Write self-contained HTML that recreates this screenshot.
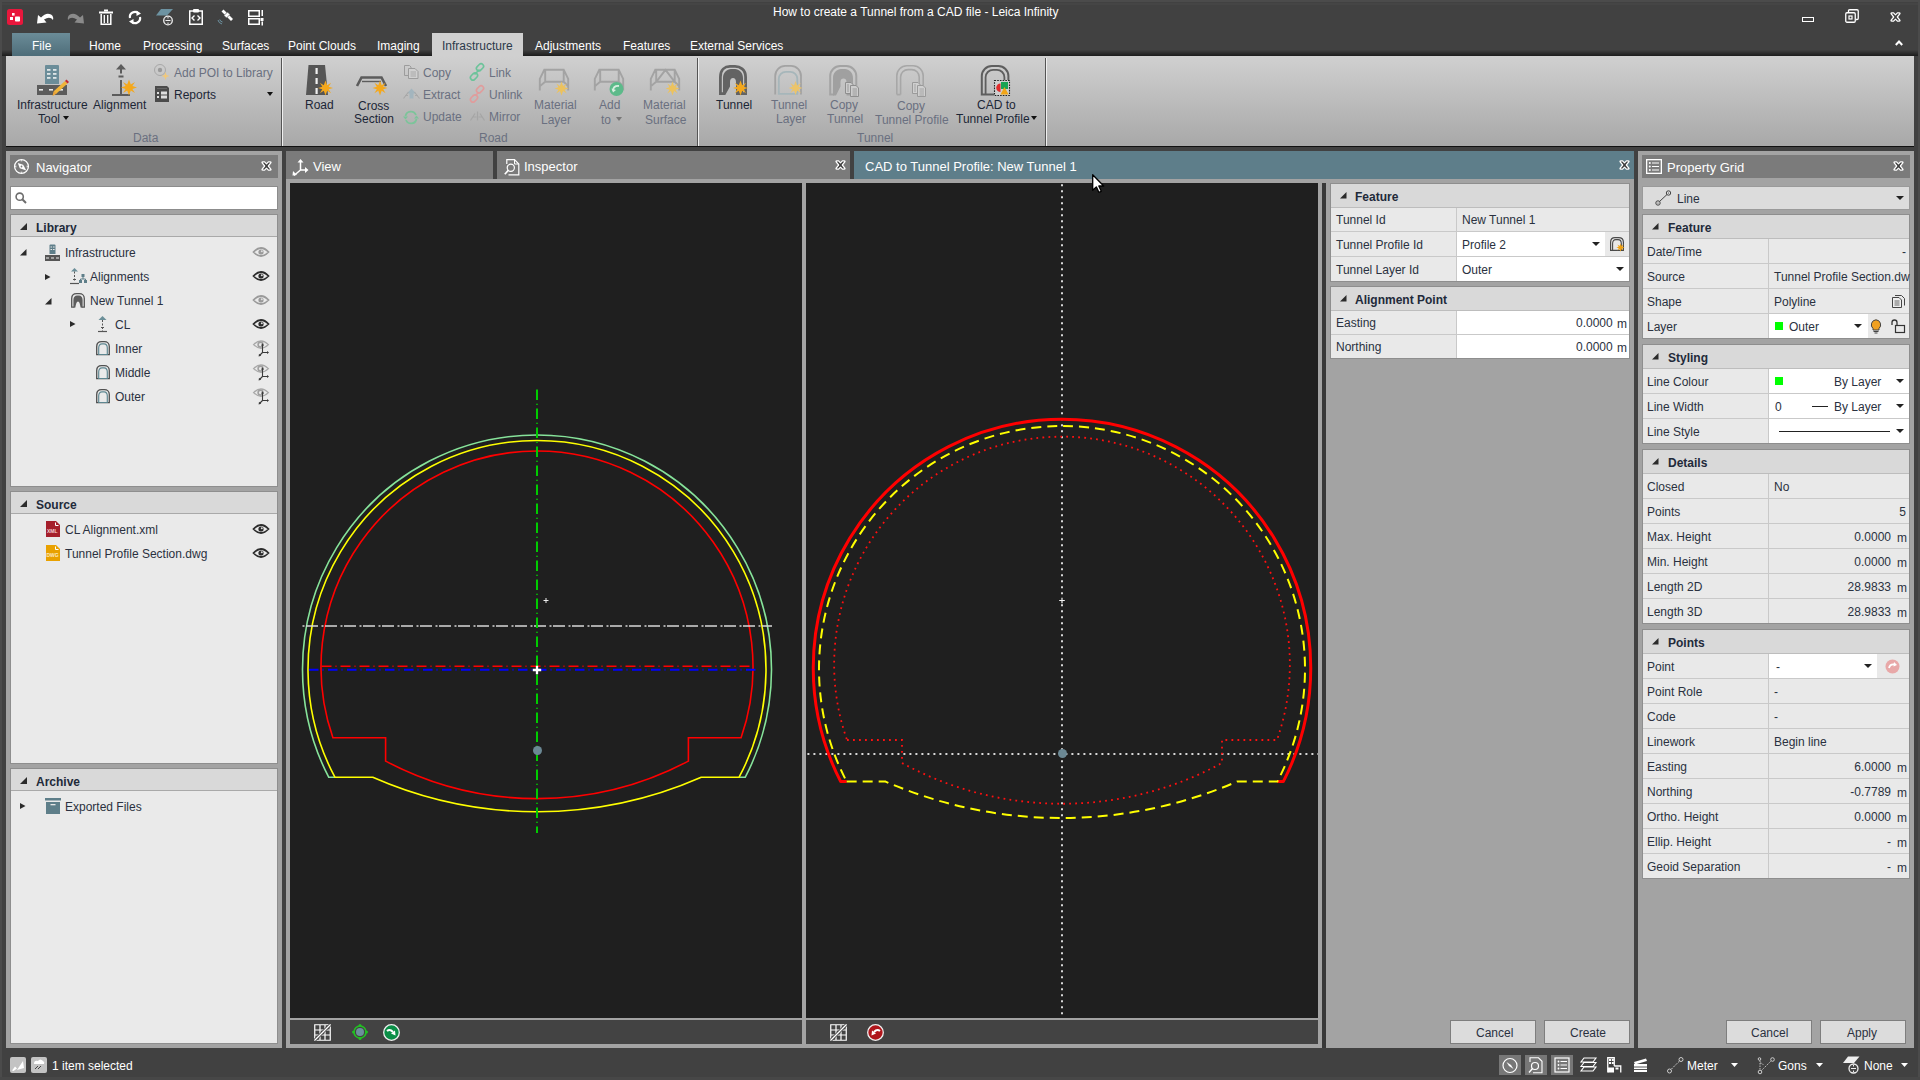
<!DOCTYPE html>
<html><head><meta charset="utf-8">
<style>
*{margin:0;padding:0;box-sizing:border-box}
html,body{width:1920px;height:1080px;overflow:hidden;background:#414141;font-family:"Liberation Sans",sans-serif;font-size:12px;color:#222}
.a{position:absolute}
.t{position:absolute;white-space:nowrap;line-height:1}
.w{color:#fff}
svg{position:absolute;overflow:visible}
.nb{font-weight:bold;font-size:12px;color:#222a3a}
.tr{font-size:12px;color:#2a3140}
.rb{font-size:12px;color:#1c2636}
.rd{font-size:12px;color:#6a7080}
.btn{background:#dcdcdc;border:1px solid #7e7e7e}
</style></head><body>
<!-- window borders -->
<div class="a" style="left:0;top:0;width:1920px;height:2px;background:#4b4b4b"></div>
<div class="a" style="left:0;top:0;width:2px;height:1080px;background:#4b4b4b"></div>
<div class="a" style="left:1918px;top:0;width:2px;height:1080px;background:#4b4b4b"></div>

<div class="a" style="left:2px;top:50px;width:1916px;height:6px;background:linear-gradient(#404040,#1c1c1c)"></div>
<div class="a" style="left:2px;top:3px;width:1916px;height:2px;background:#454545"></div>
<!-- TITLE -->
<div class="t w" style="left:773px;top:6px;font-size:12px">How to create a Tunnel from a CAD file - Leica Infinity</div>

<!-- TABS -->
<div class="a" style="left:12px;top:33px;width:58px;height:23px;background:linear-gradient(#6b8c98,#4e6d79)"></div>
<div class="t w" style="left:32px;top:40px;font-size:12px">File</div>
<div class="t w" style="left:89px;top:40px;font-size:12px">Home</div>
<div class="t w" style="left:143px;top:40px;font-size:12px">Processing</div>
<div class="t w" style="left:222px;top:40px;font-size:12px">Surfaces</div>
<div class="t w" style="left:288px;top:40px;font-size:12px">Point Clouds</div>
<div class="t w" style="left:377px;top:40px;font-size:12px">Imaging</div>
<div class="a" style="left:432px;top:33px;width:91px;height:24px;background:#d0d0d0"></div>
<div class="t" style="left:442px;top:40px;font-size:12px;color:#2c3a4a">Infrastructure</div>
<div class="t w" style="left:535px;top:40px;font-size:12px">Adjustments</div>
<div class="t w" style="left:623px;top:40px;font-size:12px">Features</div>
<div class="t w" style="left:690px;top:40px;font-size:12px">External Services</div>

<!-- RIBBON -->
<div class="a" style="left:6px;top:56px;width:1908px;height:90px;background:linear-gradient(#d0d0d0,#a8a8a8)"></div>
<div class="a" style="left:6px;top:146px;width:1908px;height:1px;background:#111"></div>
<div class="a" style="left:281px;top:58px;width:1px;height:88px;background:#555"></div>
<div class="a" style="left:282px;top:58px;width:1px;height:88px;background:#f0f0f0"></div>
<div class="a" style="left:697px;top:58px;width:1px;height:88px;background:#555"></div>
<div class="a" style="left:698px;top:58px;width:1px;height:88px;background:#f0f0f0"></div>
<div class="a" style="left:1045px;top:58px;width:1px;height:88px;background:#555"></div>
<div class="a" style="left:1046px;top:58px;width:1px;height:88px;background:#f0f0f0"></div>

<!-- NAVIGATOR PANEL -->
<div class="a" style="left:6px;top:151px;width:276px;height:897px;background:#a3a3a3"></div>
<div class="a" style="left:10px;top:155px;width:268px;height:23px;background:#7b7b7b"></div>
<div class="t w" style="left:36px;top:161px;font-size:13px">Navigator</div>


<!-- NAV CONTENT -->
<svg style="left:14px;top:159px" width="16" height="16" viewBox="0 0 16 16"><circle cx="7.5" cy="7.5" r="6.9" fill="none" stroke="#fff" stroke-width="1.3"/><path d="M7.5 1 L6.6 2.3 H8.4Z M7.5 14 L6.6 12.7 H8.4Z M1 7.5 L2.3 6.6 V8.4Z M14 7.5 L12.7 6.6 V8.4Z" fill="#fff"/><path d="M3.8 4 L9.2 5.8 L12.3 11.5 L5.8 9.2Z" fill="#fff"/><circle cx="7.5" cy="7.5" r="0.9" fill="#7b7b7b"/></svg>
<svg style="left:261px;top:161px" width="12" height="11" viewBox="0 0 12 11"><path d="M1 1.6 Q1 0.8 1.9 0.8 H3.6 L5.5 2.9 L7.4 0.8 H9.1 Q10 0.8 10 1.6 L7.3 5 L10 8.4 Q10 9.2 9.1 9.2 H7.4 L5.5 7.1 L3.6 9.2 H1.9 Q1 9.2 1 8.4 L3.7 5Z" fill="#3c3c3c" stroke="#fff" stroke-width="1.25" stroke-linejoin="round"/></svg>
<div class="a" style="left:10px;top:186px;width:268px;height:24px;background:#fff;border:1px solid #8c8c8c"></div>
<svg style="left:15px;top:192px" width="12" height="12" viewBox="0 0 12 12"><circle cx="4.7" cy="4.7" r="3.6" fill="none" stroke="#6d6d6d" stroke-width="1.6"/><path d="M7.3 7.3 L11 11" stroke="#6d6d6d" stroke-width="2"/></svg>

<!-- Library section -->
<div class="a" style="left:10px;top:214px;width:268px;height:273px;background:#eaeaea;border:1px solid #8e8e8e"></div>
<div class="a" style="left:11px;top:215px;width:266px;height:22px;background:#d9d9d9;border-bottom:1px solid #a9a9a9"></div>
<svg style="left:20px;top:223px" width="7" height="7"><path d="M7 0 L7 7 L0 7Z" fill="#2b2b2b"/></svg>
<div class="t nb" style="left:36px;top:222px">Library</div>

<!-- Source section -->
<div class="a" style="left:10px;top:491px;width:268px;height:273px;background:#eaeaea;border:1px solid #8e8e8e"></div>
<div class="a" style="left:11px;top:492px;width:266px;height:22px;background:#d9d9d9;border-bottom:1px solid #a9a9a9"></div>
<svg style="left:20px;top:500px" width="7" height="7"><path d="M7 0 L7 7 L0 7Z" fill="#2b2b2b"/></svg>
<div class="t nb" style="left:36px;top:499px">Source</div>

<!-- Archive section -->
<div class="a" style="left:10px;top:768px;width:268px;height:276px;background:#eaeaea;border:1px solid #8e8e8e"></div>
<div class="a" style="left:11px;top:769px;width:266px;height:22px;background:#d9d9d9;border-bottom:1px solid #a9a9a9"></div>
<svg style="left:20px;top:777px" width="7" height="7"><path d="M7 0 L7 7 L0 7Z" fill="#2b2b2b"/></svg>
<div class="t nb" style="left:36px;top:776px">Archive</div>



<!-- PROPERTY GRID outer -->
<div class="a" style="left:1638px;top:151px;width:276px;height:897px;background:#a3a3a3"></div>
<div class="a" style="left:1642px;top:155px;width:268px;height:23px;background:#7b7b7b"></div>



<!-- QUICK ACCESS -->
<svg style="left:7px;top:9px" width="16" height="16" viewBox="0 0 16 16"><rect x="0" y="0" width="16" height="16" rx="2.5" fill="#e8173c"/><rect x="5" y="4" width="2.6" height="2.6" fill="#fff"/><rect x="3" y="8" width="3" height="3" fill="#fff"/><rect x="8" y="7.5" width="5" height="5" rx="0.8" fill="#fff"/></svg>
<svg style="left:37px;top:11px" width="17" height="13" viewBox="0 0 17 13"><path d="M0 12.5 L1 4 L4 6.5 Q9 1 14 3.5 Q17 5.5 16 9 Q13 5 7 8.5 L9.5 11.5Z" fill="#fff"/></svg>
<svg style="left:67px;top:11px" width="17" height="13" viewBox="0 0 17 13"><path d="M17 12.5 L16 4 L13 6.5 Q8 1 3 3.5 Q0 5.5 1 9 Q4 5 10 8.5 L7.5 11.5Z" fill="#8a8a8a"/></svg>
<svg style="left:99px;top:9px" width="14" height="16" viewBox="0 0 14 16"><rect x="0" y="2.5" width="14" height="2" fill="#fff"/><rect x="5" y="0.5" width="4" height="2" fill="#fff"/><path d="M2.2 5 V15.2 H11.8 V5" fill="none" stroke="#fff" stroke-width="1.5"/><path d="M5.3 6 V14 M8.7 6 V14" stroke="#fff" stroke-width="1.3"/></svg>
<svg style="left:128px;top:10px" width="14" height="15" viewBox="0 0 14 15"><path d="M2 8 A5 5 0 0 1 10.5 3.5" fill="none" stroke="#fff" stroke-width="2.2"/><path d="M12 7 A5 5 0 0 1 3.5 11.5" fill="none" stroke="#fff" stroke-width="2.2"/><path d="M8.5 0.5 L13 3.5 L8.5 6Z M5.5 9 L1 11.5 L5.5 14.5Z" fill="#fff"/></svg>
<svg style="left:156px;top:9px" width="18" height="17" viewBox="0 0 18 17"><path d="M5 0 H17 L11 6.5 H0Z" fill="#6d93a2"/><circle cx="12" cy="11.5" r="4.3" fill="#4a4a4a" stroke="#eee" stroke-width="1.3"/><path d="M9.5 11.5 H14.5 M12 8 V9.5 M12 13.5 V15" stroke="#eee" stroke-width="1"/></svg>
<svg style="left:189px;top:9px" width="14" height="16" viewBox="0 0 14 16"><rect x="0.75" y="2" width="12.5" height="13.25" fill="none" stroke="#fff" stroke-width="1.5"/><rect x="4" y="0" width="6" height="3.5" rx="1" fill="#fff"/><path d="M5.5 6.5 L3 9 L5.5 11.5 M8.5 6.5 L11 9 L8.5 11.5" fill="none" stroke="#fff" stroke-width="1.4"/></svg>
<svg style="left:217px;top:9px" width="17" height="16" viewBox="0 0 17 16"><path d="M6.5 0.5 L16 10 L14 12 L4.5 2.5Z" fill="#fff"/><path d="M7 6.5 L10.5 3 L13 5.5 L9.5 9Z" fill="#fff" stroke="#444" stroke-width="0.6"/><path d="M1 11 Q1.5 14 5 15 M2.8 10.5 Q3 12.5 5.5 13" fill="none" stroke="#6d93a2" stroke-width="1"/></svg>
<svg style="left:248px;top:10px" width="16" height="16" viewBox="0 0 16 16"><rect x="0.75" y="0.75" width="10.5" height="5.5" fill="none" stroke="#fff" stroke-width="1.5"/><rect x="0.75" y="8.75" width="10.5" height="5.5" fill="none" stroke="#fff" stroke-width="1.5"/><rect x="13.5" y="0" width="1.5" height="6" fill="#fff"/><rect x="12.5" y="8" width="3" height="3" fill="#fff"/><rect x="13.5" y="11.5" width="1.5" height="4" fill="#fff"/></svg>

<!-- window controls -->
<div class="a" style="left:1802px;top:17px;width:12px;height:5px;border:1.3px solid #fff"></div>
<svg style="left:1845px;top:9px" width="14" height="14" viewBox="0 0 14 14"><path d="M3.5 3 V2 Q3.5 0.75 4.75 0.75 H12 Q13.25 0.75 13.25 2 V9.25 Q13.25 10.5 12 10.5 H11" fill="none" stroke="#fff" stroke-width="1.3"/><rect x="0.75" y="3.75" width="9.5" height="9.5" rx="1.2" fill="none" stroke="#fff" stroke-width="1.3"/><rect x="4" y="7" width="3" height="3" fill="none" stroke="#fff" stroke-width="1.2"/></svg>
<svg style="left:1890px;top:12px" width="12" height="11" viewBox="0 0 12 11"><path d="M1 1.6 Q1 0.8 1.9 0.8 H3.6 L5.5 2.9 L7.4 0.8 H9.1 Q10 0.8 10 1.6 L7.3 5 L10 8.4 Q10 9.2 9.1 9.2 H7.4 L5.5 7.1 L3.6 9.2 H1.9 Q1 9.2 1 8.4 L3.7 5Z" fill="#404040" stroke="#fff" stroke-width="1.25" stroke-linejoin="round"/></svg>
<svg style="left:1895px;top:40px" width="8" height="6" viewBox="0 0 8 6"><path d="M0.8 5 L4 1.5 L7.2 5" fill="none" stroke="#fff" stroke-width="2"/></svg>
<!-- RIBBON CONTENT -->
<!-- Infrastructure Tool -->
<svg style="left:37px;top:64px" width="32" height="33" viewBox="0 0 32 33"><path d="M8 2 Q8 1 9 1 H21 Q22 1 22 2 V20 H8Z" fill="#6b8d99"/><g fill="#dfe6e8"><rect x="10" y="5" width="3.5" height="1.8"/><rect x="16" y="5" width="3.5" height="1.8"/><rect x="10" y="9" width="3.5" height="1.8"/><rect x="16" y="9" width="3.5" height="1.8"/><rect x="10" y="13" width="3.5" height="1.8"/><rect x="16" y="13" width="3.5" height="1.8"/></g><rect x="0" y="21" width="30" height="10" fill="#5c5c5c"/><g fill="#e8e8e8"><rect x="2" y="25" width="4" height="1.6"/><rect x="12" y="25" width="4" height="1.6"/><rect x="22" y="25" width="4" height="1.6"/></g><path d="M15.5 32 L17 27 L28 17 L30.5 19.5 L19.5 29.5Z" fill="#f0b43a"/><path d="M28 17 L29.5 15.5 L32 18 L30.5 19.5Z" fill="#c4262e"/><path d="M15.5 32 L17 27 L19.5 29.5Z" fill="#e9a23a"/></svg>
<div class="t rb" style="left:17px;top:99px">Infrastructure</div>
<div class="t rb" style="left:38px;top:113px">Tool</div>
<svg style="left:63px;top:116px" width="6" height="4"><path d="M0 0 H6 L3 4Z" fill="#111"/></svg>
<!-- Alignment -->
<svg style="left:112px;top:64px" width="26" height="33" viewBox="0 0 26 33"><path d="M9 0 L14 5.5 H4Z" fill="#5c5c5c"/><rect x="8" y="5" width="2" height="4.5" fill="#5c5c5c"/><rect x="6.5" y="11.5" width="5" height="2" fill="#5c5c5c"/><rect x="8" y="16" width="2" height="15" fill="#5c5c5c"/><rect x="0" y="30" width="18" height="2" fill="#5c5c5c"/><g transform="translate(17,23.5)"><path d="M0 -8 L1.8 -3 L6 -5.6 L3.4 -1.4 L8 0 L3.4 1.4 L6 5.6 L1.8 3 L0 8 L-1.8 3 L-6 5.6 L-3.4 1.4 L-8 0 L-3.4 -1.4 L-6 -5.6 L-1.8 -3Z" fill="#f4a81c"/></g></svg>
<div class="t rb" style="left:93px;top:99px">Alignment</div>
<!-- Add POI / Reports -->
<svg style="left:154px;top:64px" width="16" height="16" viewBox="0 0 16 16"><circle cx="6" cy="6" r="5.5" fill="none" stroke="#a8a8a8" stroke-width="1"/><circle cx="6" cy="6" r="2.2" fill="#9a9a9a"/><g transform="translate(11.5,12)" fill="#f2c878"><path d="M0 -4 L1 -1 L4 0 L1 1 L0 4 L-1 1 L-4 0 L-1 -1Z"/></g></svg>
<div class="t rd" style="left:174px;top:67px">Add POI to Library</div>
<svg style="left:155px;top:86px" width="15" height="16" viewBox="0 0 15 16"><path d="M0 0 H12 L14 2 V16 H0Z" fill="#4b4b4b"/><rect x="2" y="6" width="2" height="2" fill="#ddd"/><rect x="2" y="10" width="2" height="2" fill="#ddd"/><rect x="6" y="5.5" width="6" height="3" fill="#ddd"/><rect x="6" y="9.5" width="6" height="3" fill="#ddd"/><rect x="2" y="2" width="10" height="1" fill="#666"/></svg>
<div class="t rb" style="left:174px;top:89px">Reports</div>
<svg style="left:267px;top:92px" width="6" height="4"><path d="M0 0 H6 L3 4Z" fill="#111"/></svg>
<div class="t rd" style="left:133px;top:132px">Data</div>

<!-- Road -->
<svg style="left:306px;top:65px" width="30" height="31" viewBox="0 0 30 31"><path d="M2.5 0 H19 L22 30 H0Z" fill="#565656"/><rect x="9.5" y="3" width="2.2" height="6" fill="#f0f0f0"/><rect x="9.5" y="13" width="2.2" height="6" fill="#f0f0f0"/><rect x="9.5" y="23" width="2.2" height="6" fill="#f0f0f0"/><g transform="translate(19.5,23)"><path d="M0 -7.5 L1.7 -2.8 L5.6 -5.3 L3.2 -1.3 L7.5 0 L3.2 1.3 L5.6 5.3 L1.7 2.8 L0 7.5 L-1.7 2.8 L-5.6 5.3 L-3.2 1.3 L-7.5 0 L-3.2 -1.3 L-5.6 -5.3 L-1.7 -2.8Z" fill="#f4a81c"/></g></svg>
<div class="t rb" style="left:305px;top:99px">Road</div>
<!-- Cross Section -->
<svg style="left:356px;top:75px" width="32" height="22" viewBox="0 0 32 22"><path d="M1 11 L5.5 2.5 H25.5 L30 11" fill="none" stroke="#5c5c5c" stroke-width="2.6"/><path d="M6 6.5 H25" stroke="#5c5c5c" stroke-width="1.4"/><g transform="translate(24,13)"><path d="M0 -7.5 L1.7 -2.8 L5.6 -5.3 L3.2 -1.3 L7.5 0 L3.2 1.3 L5.6 5.3 L1.7 2.8 L0 7.5 L-1.7 2.8 L-5.6 5.3 L-3.2 1.3 L-7.5 0 L-3.2 -1.3 L-5.6 -5.3 L-1.7 -2.8Z" fill="#f4a81c"/></g></svg>
<div class="t rb" style="left:358px;top:100px">Cross</div>
<div class="t rb" style="left:354px;top:113px">Section</div>
<!-- Copy/Extract/Update -->
<svg style="left:404px;top:65px" width="15" height="14" viewBox="0 0 15 14"><path d="M0.5 0.5 H5.5 L7 2 V10.5 H0.5Z" fill="none" stroke="#9c9c9c"/><path d="M4.5 3.5 H11 L14 6.5 V13.5 H4.5Z" fill="#d0d0d0" stroke="#9c9c9c"/><path d="M6.5 7 H12 M6.5 9 H12 M6.5 11 H12" stroke="#a8a8a8"/></svg>
<div class="t rd" style="left:423px;top:67px">Copy</div>
<svg style="left:403px;top:88px" width="17" height="11" viewBox="0 0 17 11"><path d="M8.5 0.5 L13 5.5 H10.5 V10.5 H6.5 V5.5 H4Z" fill="#a3b5be"/><path d="M0.5 10.5 L5.5 4 M16.5 10.5 L11.5 4 M2 7.5 H5 M12 7.5 H15" stroke="#a8a8a8" stroke-width="1.1"/></svg>
<div class="t rd" style="left:423px;top:89px">Extract</div>
<svg style="left:403px;top:110px" width="16" height="15" viewBox="0 0 16 15"><path d="M2.5 6 A5.5 5.5 0 0 1 13 5" fill="none" stroke="#7cc49a" stroke-width="1.8"/><path d="M13.5 9 A5.5 5.5 0 0 1 3 10" fill="none" stroke="#7cc49a" stroke-width="1.8"/><path d="M0 6.5 L5 6.5 L2.5 9.5Z M16 8.5 L11 8.5 L13.5 5.5Z" fill="#7cc49a"/></svg>
<div class="t rd" style="left:423px;top:111px">Update</div>
<!-- Link/Unlink/Mirror -->
<svg style="left:469px;top:64px" width="16" height="16" viewBox="0 0 16 16"><rect x="7" y="0.8" width="8" height="5" rx="2.5" transform="rotate(-45 11 3.3)" fill="none" stroke="#6cc39a" stroke-width="1.6"/><rect x="1" y="10" width="8" height="5" rx="2.5" transform="rotate(-45 5 12.5)" fill="none" stroke="#6cc39a" stroke-width="1.6"/><path d="M5.5 10.5 L10.5 5.5" stroke="#6cc39a" stroke-width="1.6"/></svg>
<div class="t rd" style="left:489px;top:67px">Link</div>
<svg style="left:469px;top:86px" width="16" height="16" viewBox="0 0 16 16"><rect x="7" y="0.8" width="8" height="5" rx="2.5" transform="rotate(-45 11 3.3)" fill="none" stroke="#e09c9c" stroke-width="1.6"/><rect x="1" y="10" width="8" height="5" rx="2.5" transform="rotate(-45 5 12.5)" fill="none" stroke="#e09c9c" stroke-width="1.6"/><path d="M6.5 9.5 L9.5 6.5" stroke="#e09c9c" stroke-width="1.6"/></svg>
<div class="t rd" style="left:489px;top:89px">Unlink</div>
<svg style="left:470px;top:111px" width="15" height="10" viewBox="0 0 15 10"><path d="M0.5 9.5 L5 2.5 M14.5 9.5 L10 2.5 M2.5 6 H6.5 M8.5 6 H12.5 M7.5 0.5 V9.5" fill="none" stroke="#a5a5a5" stroke-width="1.2"/></svg>
<div class="t rd" style="left:489px;top:111px">Mirror</div>
<div class="t rd" style="left:479px;top:132px">Road</div>
<!-- Material Layer / Add to / Material Surface -->
<svg style="left:538px;top:69px" width="32" height="26" viewBox="0 0 32 26"><path d="M1.8 21.4 V9.9 L6.3 0.8 H25.7 L30.2 9.9 V21.4 M7.2 0.8 V12.8 H25.7 V0.8 M1.8 17.2 L7.2 12.8 M25.7 12.8 L30.2 17.2" fill="none" stroke="#a3a3a3" stroke-width="1.9"/><g transform="translate(23.5,19.5)"><path d="M0 -7 L1.6 -2.6 L5.2 -5 L3 -1.2 L7 0 L3 1.2 L5.2 5 L1.6 2.6 L0 7 L-1.6 2.6 L-5.2 5 L-3 1.2 L-7 0 L-3 -1.2 L-5.2 -5 L-1.6 -2.6Z" fill="#ecc25e"/></g></svg>
<div class="t rd" style="left:534px;top:99px">Material</div>
<div class="t rd" style="left:541px;top:114px">Layer</div>
<svg style="left:593px;top:69px" width="32" height="28" viewBox="0 0 32 28"><path d="M1.8 21.4 V9.9 L6.3 0.8 H25.7 L30.2 9.9 V21.4 M7.2 0.8 V12.8 H25.7 V0.8 M1.8 17.2 L7.2 12.8 M25.7 12.8 L30.2 17.2" fill="none" stroke="#a3a3a3" stroke-width="1.9"/><circle cx="23.5" cy="20" r="7" fill="#5dba8a"/><path d="M20 21.5 Q20.5 16.5 26 17" fill="none" stroke="#d8eee0" stroke-width="1.8"/><path d="M18.5 19.5 L20 23.5 L23 21Z" fill="#d8eee0"/></svg>
<div class="t rd" style="left:599px;top:99px">Add</div>
<div class="t rd" style="left:601px;top:114px">to</div>
<svg style="left:616px;top:117px" width="6" height="4"><path d="M0 0 H6 L3 4Z" fill="#777"/></svg>
<svg style="left:649px;top:69px" width="32" height="26" viewBox="0 0 32 26"><path d="M1.8 21.4 V9.9 L6.3 0.8 H25.7 L30.2 9.9 V21.4 M7.2 0.8 V12.8 H25.7 V0.8 M1.8 17.2 L7.2 12.8 M25.7 12.8 L30.2 17.2 M7.2 12.8 L16.5 0.8 L25.7 12.8" fill="none" stroke="#a3a3a3" stroke-width="1.9"/><g transform="translate(23.5,19.5)"><path d="M0 -7 L1.6 -2.6 L5.2 -5 L3 -1.2 L7 0 L3 1.2 L5.2 5 L1.6 2.6 L0 7 L-1.6 2.6 L-5.2 5 L-3 1.2 L-7 0 L-3 -1.2 L-5.2 -5 L-1.6 -2.6Z" fill="#ecc25e"/></g></svg>
<div class="t rd" style="left:643px;top:99px">Material</div>
<div class="t rd" style="left:645px;top:114px">Surface</div>

<!-- Tunnel group -->
<svg style="left:718px;top:65px" width="31" height="32" viewBox="0 0 31 32"><path d="M6 28.6 H2.4 V12 C2.4 4.5 7 1.4 12 1.4 H17 C22 1.4 27.6 4.5 27.6 12 V28.6 H24" fill="none" stroke="#636363" stroke-width="2.8"/><path d="M5 30 V13 C5 7.5 9 4 13 4 H17 C21 4 25 7.5 25 13 V30 H18 V17 C18 14.5 16.8 13 15 13 C13.2 13 12 14.5 12 17 V21.5 L7.3 30Z" fill="#636363"/><g transform="translate(22.5,23)"><path d="M0 -7.5 L1.7 -2.8 L5.6 -5.3 L3.2 -1.3 L7.5 0 L3.2 1.3 L5.6 5.3 L1.7 2.8 L0 7.5 L-1.7 2.8 L-5.6 5.3 L-3.2 1.3 L-7.5 0 L-3.2 -1.3 L-5.6 -5.3 L-1.7 -2.8Z" fill="#f4a81c"/></g></svg>
<div class="t rb" style="left:716px;top:99px">Tunnel</div>
<svg style="left:774px;top:65px" width="30" height="31" viewBox="0 0 30 31"><path d="M1.2 29.6 V10.9 C1.2 5.40 5.70 0.9 11.2 0.9 H17.0 C22.50 0.9 27.0 5.40 27.0 10.9 V29.6" fill="none" stroke="#a3a3a3" stroke-width="1.8"/><path d="M4.8 28.8 V13.8 C4.8 9.95 7.95 6.8 11.8 6.8 H16.3 C20.15 6.8 23.3 9.95 23.3 13.8 V28.8Z" fill="none" stroke="#a6b6ba" stroke-width="1.8"/><g transform="translate(21.6,23) scale(0.933)"><path d="M0 -7.5 L1.7 -2.8 L5.6 -5.3 L3.2 -1.3 L7.5 0 L3.2 1.3 L5.6 5.3 L1.7 2.8 L0 7.5 L-1.7 2.8 L-5.6 5.3 L-3.2 1.3 L-7.5 0 L-3.2 -1.3 L-5.6 -5.3 L-1.7 -2.8Z" fill="#ecc46a"/></g></svg>
<div class="t rd" style="left:771px;top:99px">Tunnel</div>
<div class="t rd" style="left:776px;top:113px">Layer</div>
<svg style="left:829px;top:65px" width="32" height="32" viewBox="0 0 32 32"><path d="M5 29.6 H1.2 V11.0 C1.2 5.50 5.70 1.0 11.2 1.0 H17.3 C22.80 1.0 27.3 5.50 27.3 11.0 V29.6 H23.5" fill="none" stroke="#a3a3a3" stroke-width="2"/><path d="M4 30.6 V13 C4 7.5 8 4 12 4 H16 C20 4 24 7.5 24 13 V30.6 H17.5 V17 C17.5 14.5 16.3 13.5 14.5 13.5 C12.7 13.5 11.5 14.5 11.5 17 V21.5 L7 30.6Z" fill="#a0a0a0"/><path d="M16.5 17.5 H22 L24 19.5 V28.5 H16.5Z" fill="#cdcdcd" stroke="#8e8e8e" stroke-width="1"/><path d="M18 20 H20 M18 22 H20 M18 24 H20 M18 26 H20" stroke="#8e8e8e" stroke-width="0.8"/><path d="M21.5 20.5 H27 L29.5 23 V31.5 H21.5Z" fill="#cdcdcd" stroke="#8e8e8e" stroke-width="1"/><path d="M23.5 24 H28 M23.5 26 H28 M23.5 28 H28 M23.5 30 H28" stroke="#8e8e8e" stroke-width="0.8"/></svg>
<div class="t rd" style="left:830px;top:99px">Copy</div>
<div class="t rd" style="left:827px;top:113px">Tunnel</div>
<svg style="left:896px;top:65px" width="31" height="32" viewBox="0 0 31 32"><path d="M0.8 29.6 H4.6 M23.2 29.6 H27.2 M0.8 29.6 V10.8 C0.8 5.30 5.30 0.8 10.8 0.8 H17.2 C22.70 0.8 27.2 5.30 27.2 10.8 V29.6" fill="none" stroke="#a7a7a7" stroke-width="1.6"/><path d="M4.6 29.6 V12.1 C4.6 7.97 7.97 4.6 12.1 4.6 H15.7 C19.82 4.6 23.2 7.97 23.2 12.1 V29.6" fill="none" stroke="#a7a7a7" stroke-width="1.6"/><path d="M16.5 17.5 H22 L24 19.5 V28.5 H16.5Z" fill="#cfcfcf" stroke="#9a9a9a" stroke-width="1"/><path d="M18 20 H20 M18 22 H20 M18 24 H20 M18 26 H20" stroke="#9a9a9a" stroke-width="0.8"/><path d="M21.5 20.5 H27 L29.5 23 V31.5 H21.5Z" fill="#cfcfcf" stroke="#9a9a9a" stroke-width="1"/><path d="M23.5 24 H28 M23.5 26 H28 M23.5 28 H28 M23.5 30 H28" stroke="#9a9a9a" stroke-width="0.8"/></svg>
<div class="t rd" style="left:897px;top:100px">Copy</div>
<div class="t rd" style="left:875px;top:114px">Tunnel Profile</div>
<svg style="left:980px;top:65px" width="31" height="32" viewBox="0 0 31 32"><path d="M14 29.6 H1.8 V11.0 C1.8 5.50 6.30 1.0 11.8 1.0 H18.4 C23.90 1.0 28.4 5.50 28.4 11.0 V15" fill="none" stroke="#5e5e5e" stroke-width="2"/><path d="M5.6 29.6 V12.3 C5.6 8.18 8.97 4.8 13.1 4.8 H16.9 C21.02 4.8 24.4 8.18 24.4 12.3 V15" fill="none" stroke="#5e5e5e" stroke-width="1.8"/><rect x="14.5" y="15.5" width="15" height="15" fill="#cfcfcf" stroke="#222" stroke-width="1.1" stroke-dasharray="1.6 1.1"/><path d="M20.5 18.5 A4.3 4.3 0 0 0 20.5 27.1Z" fill="#e02a2a"/><rect x="21" y="17" width="7" height="7" fill="#1aa354"/><path d="M24.5 22 L28.6 29.6 H20.4Z" fill="#f2a516"/></svg>
<div class="t rb" style="left:977px;top:99px">CAD to</div>
<div class="t rb" style="left:956px;top:113px">Tunnel Profile</div>
<svg style="left:1031px;top:116px" width="6" height="4"><path d="M0 0 H6 L3 4Z" fill="#111"/></svg>
<div class="t rd" style="left:857px;top:132px">Tunnel</div>
<!-- TREE -->
<svg style="left:20px;top:249px" width="7" height="7"><path d="M6.5 0 L6.5 6.5 L0 6.5Z" fill="#2b2b2b"/></svg>
<svg style="left:45px;top:244px" width="16" height="17" viewBox="0 0 16 17"><path d="M4.5 1.5 Q4.5 0.5 5.5 0.5 H9.5 Q10.5 0.5 10.5 1.5 V10 H4.5Z" fill="#5e7e89"/><rect x="5.5" y="2.5" width="1.6" height="1" fill="#e6e6e6"/><rect x="8" y="2.5" width="1.6" height="1" fill="#e6e6e6"/><rect x="5.5" y="5" width="1.6" height="1" fill="#e6e6e6"/><rect x="8" y="5" width="1.6" height="1" fill="#e6e6e6"/><rect x="0" y="11" width="15" height="6" fill="#555"/><rect x="1" y="13.5" width="3" height="1" fill="#eee"/><rect x="6" y="13.5" width="3" height="1" fill="#eee"/><rect x="11" y="13.5" width="3" height="1" fill="#eee"/></svg>
<div class="t tr" style="left:65px;top:247px">Infrastructure</div>

<svg style="left:45px;top:274px" width="6" height="6"><path d="M0 0 L5.5 3 L0 6Z" fill="#2b2b2b"/></svg>
<svg style="left:70px;top:268px" width="17" height="17" viewBox="0 0 17 17"><path d="M4.5 0 L8 3.5 H1Z" fill="#6b8f99"/><path d="M4.5 3.5 V13" stroke="#555" stroke-width="1" stroke-dasharray="2 1.5"/><path d="M0 15.5 H9" stroke="#555" stroke-width="1.2"/><path d="M3 11.5 H6" stroke="#555" stroke-width="1"/><rect x="11.5" y="6" width="3" height="3" fill="#5e7e89"/><rect x="9" y="12" width="3" height="3" fill="#5e7e89"/><rect x="14" y="12" width="3" height="3" fill="#5e7e89"/><path d="M13 9 V11 H10.5 V12 M13 11 H15.5 V12" stroke="#5e7e89" fill="none"/></svg>
<div class="t tr" style="left:90px;top:271px">Alignments</div>

<svg style="left:45px;top:298px" width="7" height="7"><path d="M6.5 0 L6.5 6.5 L0 6.5Z" fill="#2b2b2b"/></svg>
<svg style="left:71px;top:293px" width="15" height="15" viewBox="0 0 15 15"><path d="M3.5 14.2 H0.7 V5.6 C0.7 2.2 2.8 0.7 5.6 0.7 H8.4 C11.2 0.7 13.3 2.2 13.3 5.6 V14.2 H10.5" fill="none" stroke="#555" stroke-width="1.3"/><path d="M2.4 14.6 V7 C2.4 4 4 2.4 6 2.4 H8 C10 2.4 11.6 4 11.6 7 V14.6 H9.6 C9.1 11.5 8.4 8.6 7 8.6 C5.6 8.6 4.9 11.5 4.4 14.6Z" fill="#5c5c5c"/></svg>
<div class="t tr" style="left:90px;top:295px">New Tunnel 1</div>

<svg style="left:70px;top:321px" width="6" height="6"><path d="M0 0 L5.5 3 L0 6Z" fill="#2b2b2b"/></svg>
<svg style="left:98px;top:316px" width="10" height="17" viewBox="0 0 10 17"><path d="M4.5 0 L8.5 4 H0.5Z" fill="#6b8f99"/><path d="M4.5 4 V15" stroke="#555" stroke-width="1" stroke-dasharray="2 1.5"/><path d="M0 15.5 H9" stroke="#555" stroke-width="1.2"/><path d="M3 11.5 H6" stroke="#555"/></svg>
<div class="t tr" style="left:115px;top:319px">CL</div>

<svg style="left:96px;top:341px" width="15" height="15" viewBox="0 0 15 15"><path d="M0.7 13.6 V5.6 C0.7 2.2 2.8 0.7 5.6 0.7 H8.4 C11.2 0.7 13.3 2.2 13.3 5.6 V13.6Z" fill="none" stroke="#505050" stroke-width="1.3"/><path d="M2.7 13.5 V7 C2.7 4.2 4.1 2.9 6 2.9 H8 C9.9 2.9 11.3 4.2 11.3 7 V13.5Z" fill="none" stroke="#5e8791" stroke-width="1.15"/></svg>
<div class="t tr" style="left:115px;top:343px">Inner</div>
<svg style="left:96px;top:365px" width="15" height="15" viewBox="0 0 15 15"><path d="M0.7 13.6 V5.6 C0.7 2.2 2.8 0.7 5.6 0.7 H8.4 C11.2 0.7 13.3 2.2 13.3 5.6 V13.6Z" fill="none" stroke="#505050" stroke-width="1.3"/><path d="M2.7 13.5 V7 C2.7 4.2 4.1 2.9 6 2.9 H8 C9.9 2.9 11.3 4.2 11.3 7 V13.5Z" fill="none" stroke="#5e8791" stroke-width="1.15"/></svg>
<div class="t tr" style="left:115px;top:367px">Middle</div>
<svg style="left:96px;top:389px" width="15" height="15" viewBox="0 0 15 15"><path d="M0.7 13.6 V5.6 C0.7 2.2 2.8 0.7 5.6 0.7 H8.4 C11.2 0.7 13.3 2.2 13.3 5.6 V13.6Z" fill="none" stroke="#505050" stroke-width="1.3"/><path d="M2.7 13.5 V7 C2.7 4.2 4.1 2.9 6 2.9 H8 C9.9 2.9 11.3 4.2 11.3 7 V13.5Z" fill="none" stroke="#5e8791" stroke-width="1.15"/></svg>
<div class="t tr" style="left:115px;top:391px">Outer</div>

<!-- eyes -->
<svg style="left:253px;top:247px" width="16" height="10" viewBox="0 0 16 10"><path d="M0.5 5 Q8 -3 15.5 5 Q8 13 0.5 5Z" fill="none" stroke="#9a9a9a" stroke-width="1.8"/><circle cx="8" cy="5" r="2.6" fill="#9a9a9a"/><circle cx="8.8" cy="4.2" r="1" fill="#ddd"/></svg>
<svg style="left:253px;top:271px" width="16" height="10" viewBox="0 0 16 10"><path d="M0.5 5 Q8 -3 15.5 5 Q8 13 0.5 5Z" fill="none" stroke="#2c2c2c" stroke-width="1.8"/><circle cx="8" cy="5" r="2.6" fill="#2c2c2c"/><circle cx="8.8" cy="4.2" r="1" fill="#ddd"/></svg>
<svg style="left:253px;top:295px" width="16" height="10" viewBox="0 0 16 10"><path d="M0.5 5 Q8 -3 15.5 5 Q8 13 0.5 5Z" fill="none" stroke="#9a9a9a" stroke-width="1.8"/><circle cx="8" cy="5" r="2.6" fill="#9a9a9a"/><circle cx="8.8" cy="4.2" r="1" fill="#ddd"/></svg>
<svg style="left:253px;top:319px" width="16" height="10" viewBox="0 0 16 10"><path d="M0.5 5 Q8 -3 15.5 5 Q8 13 0.5 5Z" fill="none" stroke="#2c2c2c" stroke-width="1.8"/><circle cx="8" cy="5" r="2.6" fill="#2c2c2c"/><circle cx="8.8" cy="4.2" r="1" fill="#ddd"/></svg>
<svg style="left:253px;top:340px" width="17" height="17" viewBox="0 0 17 17"><path d="M0.6 4.6 Q8 -2.6 15.4 4.6 Q8 11.8 0.6 4.6Z" fill="none" stroke="#a8a8a8" stroke-width="1.3"/><circle cx="7.5" cy="4.6" r="2.4" fill="none" stroke="#a0a0a0" stroke-width="1.6"/><path d="M9.5 4.5 V12.5 H15 M9.5 12.5 L6.5 15.5" stroke="#3a3a3a" stroke-width="1.1" fill="none"/><path d="M9.5 3.2 L8 5.4 H11Z M16 12.5 L14 11 V14Z M5.6 16.4 L6 13.8 L8.2 15.8Z" fill="#3a3a3a"/></svg>
<svg style="left:253px;top:364px" width="17" height="17" viewBox="0 0 17 17"><path d="M0.6 4.6 Q8 -2.6 15.4 4.6 Q8 11.8 0.6 4.6Z" fill="none" stroke="#a8a8a8" stroke-width="1.3"/><circle cx="7.5" cy="4.6" r="2.4" fill="none" stroke="#a0a0a0" stroke-width="1.6"/><path d="M9.5 4.5 V12.5 H15 M9.5 12.5 L6.5 15.5" stroke="#3a3a3a" stroke-width="1.1" fill="none"/><path d="M9.5 3.2 L8 5.4 H11Z M16 12.5 L14 11 V14Z M5.6 16.4 L6 13.8 L8.2 15.8Z" fill="#3a3a3a"/></svg>
<svg style="left:253px;top:388px" width="17" height="17" viewBox="0 0 17 17"><path d="M0.6 4.6 Q8 -2.6 15.4 4.6 Q8 11.8 0.6 4.6Z" fill="none" stroke="#a8a8a8" stroke-width="1.3"/><circle cx="7.5" cy="4.6" r="2.4" fill="none" stroke="#a0a0a0" stroke-width="1.6"/><path d="M9.5 4.5 V12.5 H15 M9.5 12.5 L6.5 15.5" stroke="#3a3a3a" stroke-width="1.1" fill="none"/><path d="M9.5 3.2 L8 5.4 H11Z M16 12.5 L14 11 V14Z M5.6 16.4 L6 13.8 L8.2 15.8Z" fill="#3a3a3a"/></svg>

<!-- source rows -->
<svg style="left:46px;top:521px" width="14" height="16" viewBox="0 0 14 16"><path d="M0 0 H10 L14 4 V16 H0Z" fill="#a51f2b"/><path d="M9.5 1.5 V4.5 H12.5" stroke="#fff" stroke-width="1" fill="none"/><text x="1" y="11.5" font-size="5" fill="#f3d0d0" font-family="Liberation Sans" font-weight="bold">XML</text></svg>
<div class="t tr" style="left:65px;top:524px">CL Alignment.xml</div>
<svg style="left:46px;top:545px" width="14" height="16" viewBox="0 0 14 16"><path d="M0 0 H10 L14 4 V16 H0Z" fill="#e9a100"/><path d="M9.5 1.5 V4.5 H12.5" stroke="#fff" stroke-width="1" fill="none"/><text x="0.5" y="11.5" font-size="5" fill="#fbe9c0" font-family="Liberation Sans" font-weight="bold">DWG</text></svg>
<div class="t tr" style="left:65px;top:548px">Tunnel Profile Section.dwg</div>
<svg style="left:253px;top:524px" width="16" height="10" viewBox="0 0 16 10"><path d="M0.5 5 Q8 -3 15.5 5 Q8 13 0.5 5Z" fill="none" stroke="#2c2c2c" stroke-width="1.8"/><circle cx="8" cy="5" r="2.6" fill="#2c2c2c"/><circle cx="8.8" cy="4.2" r="1" fill="#ddd"/></svg>
<svg style="left:253px;top:548px" width="16" height="10" viewBox="0 0 16 10"><path d="M0.5 5 Q8 -3 15.5 5 Q8 13 0.5 5Z" fill="none" stroke="#2c2c2c" stroke-width="1.8"/><circle cx="8" cy="5" r="2.6" fill="#2c2c2c"/><circle cx="8.8" cy="4.2" r="1" fill="#ddd"/></svg>

<!-- archive rows -->
<svg style="left:20px;top:803px" width="6" height="6"><path d="M0 0 L5.5 3 L0 6Z" fill="#2b2b2b"/></svg>
<svg style="left:45px;top:798px" width="16" height="16" viewBox="0 0 16 16"><rect x="0" y="0" width="16" height="2.5" fill="#5e7e89"/><rect x="1" y="4" width="14" height="12" fill="#5e7e89"/><rect x="5.5" y="6" width="5" height="1.3" fill="#e6e6e6"/></svg>
<div class="t tr" style="left:65px;top:801px">Exported Files</div>
<!-- VIEW PANEL -->
<div class="a" style="left:286px;top:179px;width:1348px;height:869px;background:#a3a3a3"></div>
<div class="a" style="left:286px;top:151px;width:207px;height:28px;background:#7b7b7b"></div>
<div class="a" style="left:497px;top:151px;width:353px;height:28px;background:#7b7b7b"></div>
<div class="a" style="left:854px;top:151px;width:780px;height:28px;background:#5e7e8a"></div>
<svg style="left:292px;top:159px" width="17" height="17" viewBox="0 0 17 17"><path d="M8.5 2 V11 H15 M8.5 11 L2 16.5" stroke="#fff" stroke-width="1.5" fill="none"/><path d="M8.5 0 L5.5 3.5 H11.5Z M16.5 11 L13 8 V14Z M0.5 16.5 L1 12 L5 16Z" fill="#fff"/></svg>
<div class="t w" style="left:313px;top:160px;font-size:13px">View</div>
<svg style="left:504px;top:159px" width="16" height="17" viewBox="0 0 16 17"><path d="M2.8 5 V0.7 H10.5 L14.8 5 V15.8 H4.5" fill="none" stroke="#fff" stroke-width="1.2"/><path d="M10.5 0.7 V5 H14.8" fill="none" stroke="#fff" stroke-width="1"/><circle cx="6.8" cy="8.8" r="3.6" fill="none" stroke="#fff" stroke-width="1.2"/><path d="M4.2 11.4 L0.8 15.2" stroke="#fff" stroke-width="1.6"/></svg>
<div class="t w" style="left:524px;top:160px;font-size:13px">Inspector</div>
<svg style="left:835px;top:160px" width="12" height="11" viewBox="0 0 12 11"><path d="M1 1.6 Q1 0.8 1.9 0.8 H3.6 L5.5 2.9 L7.4 0.8 H9.1 Q10 0.8 10 1.6 L7.3 5 L10 8.4 Q10 9.2 9.1 9.2 H7.4 L5.5 7.1 L3.6 9.2 H1.9 Q1 9.2 1 8.4 L3.7 5Z" fill="#3c3c3c" stroke="#fff" stroke-width="1.25" stroke-linejoin="round"/></svg>
<div class="t w" style="left:865px;top:160px;font-size:13px">CAD to Tunnel Profile: New Tunnel 1</div>
<svg style="left:1619px;top:160px" width="12" height="11" viewBox="0 0 12 11"><path d="M1 1.6 Q1 0.8 1.9 0.8 H3.6 L5.5 2.9 L7.4 0.8 H9.1 Q10 0.8 10 1.6 L7.3 5 L10 8.4 Q10 9.2 9.1 9.2 H7.4 L5.5 7.1 L3.6 9.2 H1.9 Q1 9.2 1 8.4 L3.7 5Z" fill="#3c3c3c" stroke="#fff" stroke-width="1.25" stroke-linejoin="round"/></svg>

<!-- viewports -->
<div class="a" style="left:290px;top:183px;width:512px;height:835px;background:#1f1f1f"></div>
<div class="a" style="left:806px;top:183px;width:512px;height:835px;background:#1f1f1f"></div>
<div class="a" style="left:290px;top:1020px;width:512px;height:24px;background:#434343"></div>
<div class="a" style="left:806px;top:1020px;width:512px;height:24px;background:#434343"></div>
<div class="a" style="left:1322px;top:183px;width:4px;height:865px;background:#383838"></div>
<!-- LEFT DRAWING -->
<svg style="left:290px;top:183px;overflow:hidden" width="512" height="835" viewBox="290 183 512 835">
<path d="M334.91 777.2 H328.70 A234.5 234.5 0 1 1 745.30 777.2 H739.09" fill="none" stroke="#86e39a" stroke-width="1.6"/>
<path d="M334.91 777.2 H372.8 A408.00 408.00 0 0 0 701.2 777.2 H739.09 A229 229 0 1 0 334.91 777.2Z" fill="none" stroke="#ffff00" stroke-width="1.6"/>
<path d="M332.93 737.8 H385.6 V761.1 A324.38 324.38 0 0 0 688.4 761.1 V737.8 H741.07 A216 216 0 1 0 332.93 737.8Z" fill="none" stroke="#ff0000" stroke-width="1.6"/>
<path d="M302.5 626 H772" stroke="#d8d8d8" stroke-width="1.7" stroke-dasharray="2 1.5 12 3.5"/>
<path d="M321.5 666.3 H751" stroke="#ff0000" stroke-width="1.6" stroke-dasharray="10 4 1 4"/>
<path d="M309 669.8 H756" stroke="#0000ff" stroke-width="2" stroke-dasharray="9.5 4 1 4.5"/>
<path d="M537 389.6 V833" stroke="#00cc00" stroke-width="2" stroke-dasharray="10.5 3.75 1 3.75"/>
<path d="M532.8 670 H541.2 M537 665.8 V674.2" stroke="#ffffff" stroke-width="2.3"/>
<path d="M543.5 600.5 H548.5 M546 598 V603" stroke="#eeeeee" stroke-width="1"/>
<circle cx="537.5" cy="750.5" r="4.5" fill="#6b8894"/>
</svg>
<!-- RIGHT DRAWING -->
<svg style="left:806px;top:183px;overflow:hidden" width="512" height="835" viewBox="806 183 512 835">
<path d="M1062 184.2 V1015" stroke="#d8d8d8" stroke-width="2" stroke-dasharray="2 4"/>
<path d="M807.4 754 H1318" stroke="#d8d8d8" stroke-width="2" stroke-dasharray="2 4"/>
<path d="M846.66 781.6 H840.70 A248.75 248.75 0 1 1 1283.30 781.6 H1277.34" fill="none" stroke="#ff0000" stroke-width="3" stroke-linejoin="round"/>
<path d="M846.66 781.6 H885.5 A442.49 442.49 0 0 0 1237 781.6 H1277.34 A243 243 0 1 0 846.66 781.6Z" fill="none" stroke="#ffff00" stroke-width="2" stroke-dasharray="10 6"/>
<path d="M847.02 740 H902 V763 A334.49 334.49 0 0 0 1222 763 V740 H1276.98 A227.85 227.85 0 1 0 847.02 740Z" fill="none" stroke="#ff1010" stroke-width="1.8" stroke-dasharray="1.8 4.2"/>
<path d="M1058.8 600.5 H1065.2 M1062 597.5 V603.5" stroke="#1f1f1f" stroke-width="3"/><path d="M1059.2 600.5 H1064.8 M1062 597.8 V603.2" stroke="#f4f4f4" stroke-width="1.2"/>
<circle cx="1062.5" cy="753.5" r="4.5" fill="#6b8894"/>
</svg>
<!-- CAD feature props -->
<div class="a" style="left:1330px;top:183px;width:300px;height:99px;background:#e9e9e9;border:1px solid #8e8e8e"></div>
<div class="a" style="left:1331px;top:184px;width:298px;height:24px;background:#d9d9d9;border-bottom:1px solid #bdbdbd"></div>
<svg style="left:1340px;top:192px" width="7" height="7"><path d="M6.5 0 L6.5 6.5 L0 6.5Z" fill="#2b2b2b"/></svg>
<div class="t nb" style="left:1355px;top:191px">Feature</div>
<div class="a" style="left:1456px;top:208px;width:1px;height:73px;background:#c9c9c9"></div>
<div class="a" style="left:1331px;top:231px;width:298px;height:1px;background:#c9c9c9"></div>
<div class="a" style="left:1331px;top:256px;width:298px;height:1px;background:#c9c9c9"></div>
<div class="a" style="left:1457px;top:232px;width:148px;height:24px;background:#fff"></div>
<div class="a" style="left:1457px;top:257px;width:172px;height:24px;background:#fff"></div>
<div class="t tr" style="left:1336px;top:214px">Tunnel Id</div>
<div class="t tr" style="left:1336px;top:239px">Tunnel Profile Id</div>
<div class="t tr" style="left:1336px;top:264px">Tunnel Layer Id</div>
<div class="t tr" style="left:1462px;top:214px">New Tunnel 1</div>
<div class="t tr" style="left:1462px;top:239px">Profile 2</div>
<div class="t tr" style="left:1462px;top:264px">Outer</div>
<svg style="left:1592px;top:242px" width="8" height="4"><path d="M0 0 H8 L4 4Z" fill="#222"/></svg>
<svg style="left:1616px;top:267px" width="8" height="4"><path d="M0 0 H8 L4 4Z" fill="#222"/></svg>
<svg style="left:1610px;top:237px" width="15" height="15" viewBox="0 0 15 15"><path d="M0.6 13.4 V5.2 C0.6 2 2.5 0.6 5 0.6 H8.6 C11.2 0.6 13.4 2 13.4 5.2 V13.4Z" fill="none" stroke="#4a4a4a" stroke-width="1.2"/><path d="M2.6 13.3 V6.5 C2.6 3.8 3.9 2.6 5.8 2.6 H8 C9.9 2.6 11.3 3.8 11.3 6.5 V13.3" fill="none" stroke="#4a4a4a" stroke-width="1.1"/><g transform="translate(10.5,10.5) scale(0.55)"><path d="M0 -7.5 L1.7 -2.8 L5.6 -5.3 L3.2 -1.3 L7.5 0 L3.2 1.3 L5.6 5.3 L1.7 2.8 L0 7.5 L-1.7 2.8 L-5.6 5.3 L-3.2 1.3 L-7.5 0 L-3.2 -1.3 L-5.6 -5.3 L-1.7 -2.8Z" fill="#f0a010"/></g></svg>

<div class="a" style="left:1330px;top:286px;width:300px;height:73px;background:#e9e9e9;border:1px solid #8e8e8e"></div>
<div class="a" style="left:1331px;top:287px;width:298px;height:24px;background:#d9d9d9;border-bottom:1px solid #bdbdbd"></div>
<svg style="left:1340px;top:295px" width="7" height="7"><path d="M6.5 0 L6.5 6.5 L0 6.5Z" fill="#2b2b2b"/></svg>
<div class="t nb" style="left:1355px;top:294px">Alignment Point</div>
<div class="a" style="left:1456px;top:311px;width:1px;height:47px;background:#c9c9c9"></div>
<div class="a" style="left:1331px;top:334px;width:298px;height:1px;background:#c9c9c9"></div>
<div class="a" style="left:1457px;top:311px;width:172px;height:23px;background:#fff"></div>
<div class="a" style="left:1457px;top:335px;width:172px;height:23px;background:#fff"></div>
<div class="t tr" style="left:1336px;top:317px">Easting</div>
<div class="t tr" style="left:1336px;top:341px">Northing</div>
<div class="t tr" style="left:1576px;top:317px">0.0000</div>
<div class="t tr" style="left:1617px;top:318px">m</div>
<div class="t tr" style="left:1576px;top:341px">0.0000</div>
<div class="t tr" style="left:1617px;top:342px">m</div>

<!-- buttons -->
<div class="a btn" style="left:1450px;top:1020px;width:86px;height:24px"></div>
<div class="t tr" style="left:1476px;top:1027px">Cancel</div>
<div class="a btn" style="left:1544px;top:1020px;width:86px;height:24px"></div>
<div class="t tr" style="left:1570px;top:1027px">Create</div>
<div class="a btn" style="left:1726px;top:1020px;width:86px;height:24px"></div>
<div class="t tr" style="left:1751px;top:1027px">Cancel</div>
<div class="a btn" style="left:1820px;top:1020px;width:86px;height:24px"></div>
<div class="t tr" style="left:1847px;top:1027px">Apply</div>
<!-- PROPERTY GRID -->
<svg style="left:1646px;top:159px" width="16" height="15" viewBox="0 0 16 15"><rect x="0.65" y="0.65" width="14.7" height="13.7" fill="none" stroke="#fff" stroke-width="1.3"/><circle cx="3.8" cy="4" r="1" fill="#fff"/><circle cx="3.8" cy="7.5" r="1" fill="#fff"/><circle cx="3.8" cy="11" r="1" fill="#fff"/><path d="M6 4 H13 M6 7.5 H13 M6 11 H13" stroke="#fff" stroke-width="1"/></svg>
<div class="t w" style="left:1667px;top:161px;font-size:13px">Property Grid</div>
<svg style="left:1893px;top:161px" width="12" height="11" viewBox="0 0 12 11"><path d="M1 1.6 Q1 0.8 1.9 0.8 H3.6 L5.5 2.9 L7.4 0.8 H9.1 Q10 0.8 10 1.6 L7.3 5 L10 8.4 Q10 9.2 9.1 9.2 H7.4 L5.5 7.1 L3.6 9.2 H1.9 Q1 9.2 1 8.4 L3.7 5Z" fill="#3c3c3c" stroke="#fff" stroke-width="1.25" stroke-linejoin="round"/></svg>
<div class="a" style="left:1642px;top:186px;width:268px;height:24px;background:#dcdcdc;border:1px solid #9a9a9a"></div>
<svg style="left:1655px;top:190px" width="17" height="16" viewBox="0 0 17 16"><circle cx="13.5" cy="3" r="2.2" fill="none" stroke="#444" stroke-width="1"/><circle cx="3" cy="13" r="2.2" fill="none" stroke="#444" stroke-width="1"/><circle cx="13.5" cy="3" r="0.6" fill="#444"/><circle cx="3" cy="13" r="0.6" fill="#444"/><path d="M12 4.5 L4.5 11.5" stroke="#444" stroke-width="1"/></svg>
<div class="t tr" style="left:1677px;top:193px">Line</div>
<svg style="left:1896px;top:196px" width="8" height="4"><path d="M0 0 H8 L4 4Z" fill="#222"/></svg>

<div class="a" style="left:1642px;top:214px;width:268px;height:125px;background:#e9e9e9;border:1px solid #8e8e8e"></div>
<div class="a" style="left:1643px;top:215px;width:266px;height:24px;background:#d9d9d9;border-bottom:1px solid #bdbdbd"></div>
<svg style="left:1652px;top:223px" width="7" height="7"><path d="M6.5 0 L6.5 6.5 L0 6.5Z" fill="#2b2b2b"/></svg>
<div class="t nb" style="left:1668px;top:222px">Feature</div>
<div class="a" style="left:1768px;top:239px;width:1px;height:99px;background:#c9c9c9"></div>
<div class="t tr" style="left:1647px;top:246px">Date/Time</div>
<div class="t tr" style="right:14px;top:246px">-</div>
<div class="a" style="left:1643px;top:263px;width:266px;height:1px;background:#c9c9c9"></div>
<div class="t tr" style="left:1647px;top:271px">Source</div>
<div class="t tr" style="left:1774px;top:271px">Tunnel Profile Section.dw</div>
<div class="a" style="left:1643px;top:288px;width:266px;height:1px;background:#c9c9c9"></div>
<div class="t tr" style="left:1647px;top:296px">Shape</div>
<div class="t tr" style="left:1774px;top:296px">Polyline</div><svg style="left:1892px;top:295px" width="13" height="13" viewBox="0 0 13 13"><path d="M0.5 2.5 H7 L9.5 5 V12.5 H0.5Z" fill="#eee" stroke="#444"/><path d="M3 0.5 H9.5 L12.5 3.5 V10.5" fill="none" stroke="#444"/><path d="M2.5 6 H7.5 M2.5 8 H7.5 M2.5 10 H7.5" stroke="#444" stroke-width="0.8"/></svg>
<div class="a" style="left:1643px;top:313px;width:266px;height:1px;background:#c9c9c9"></div>
<div class="t tr" style="left:1647px;top:321px">Layer</div>
<div class="a" style="left:1769px;top:314px;width:99px;height:24px;background:#fff"></div><div class="a" style="left:1775px;top:322px;width:8px;height:8px;background:#00ff00"></div><div class="t tr" style="left:1789px;top:321px">Outer</div><svg style="left:1854px;top:324px" width="8" height="4"><path d="M0 0 H8 L4 4Z" fill="#222"/></svg><svg style="left:1870px;top:319px" width="12" height="15" viewBox="0 0 12 15"><path d="M6 0.8 A5 5 0 0 1 9 9.5 V11 H3 V9.5 A5 5 0 0 1 6 0.8Z" fill="#f0a020" stroke="#444" stroke-width="1"/><path d="M3.5 12.5 H8.5 M4.5 14 H7.5" stroke="#444" stroke-width="1.2"/></svg><svg style="left:1890px;top:319px" width="15" height="14" viewBox="0 0 15 14"><path d="M2 6 V3.5 A2.5 2.5 0 0 1 7 3.5 V6" fill="none" stroke="#333" stroke-width="1.3"/><rect x="5.5" y="6.5" width="9" height="7" fill="none" stroke="#333" stroke-width="1.2"/></svg>
<div class="a" style="left:1642px;top:344px;width:268px;height:100px;background:#e9e9e9;border:1px solid #8e8e8e"></div>
<div class="a" style="left:1643px;top:345px;width:266px;height:24px;background:#d9d9d9;border-bottom:1px solid #bdbdbd"></div>
<svg style="left:1652px;top:353px" width="7" height="7"><path d="M6.5 0 L6.5 6.5 L0 6.5Z" fill="#2b2b2b"/></svg>
<div class="t nb" style="left:1668px;top:352px">Styling</div>
<div class="a" style="left:1768px;top:369px;width:1px;height:74px;background:#c9c9c9"></div>
<div class="t tr" style="left:1647px;top:376px">Line Colour</div>
<div class="a" style="left:1769px;top:369px;width:140px;height:24px;background:#fff"></div><div class="a" style="left:1775px;top:377px;width:8px;height:8px;background:#00ff00"></div><div class="t tr" style="left:1834px;top:376px">By Layer</div><svg style="left:1896px;top:379px" width="8" height="4"><path d="M0 0 H8 L4 4Z" fill="#222"/></svg>
<div class="a" style="left:1643px;top:393px;width:266px;height:1px;background:#c9c9c9"></div>
<div class="t tr" style="left:1647px;top:401px">Line Width</div>
<div class="a" style="left:1769px;top:394px;width:140px;height:24px;background:#fff"></div><div class="t tr" style="left:1775px;top:401px">0</div><div class="a" style="left:1812px;top:406px;width:16px;height:1px;background:#222"></div><div class="t tr" style="left:1834px;top:401px">By Layer</div><svg style="left:1896px;top:404px" width="8" height="4"><path d="M0 0 H8 L4 4Z" fill="#222"/></svg>
<div class="a" style="left:1643px;top:418px;width:266px;height:1px;background:#c9c9c9"></div>
<div class="t tr" style="left:1647px;top:426px">Line Style</div>
<div class="a" style="left:1769px;top:419px;width:140px;height:24px;background:#fff"></div><div class="a" style="left:1779px;top:431px;width:111px;height:1px;background:#222"></div><svg style="left:1896px;top:429px" width="8" height="4"><path d="M0 0 H8 L4 4Z" fill="#222"/></svg>
<div class="a" style="left:1642px;top:449px;width:268px;height:175px;background:#e9e9e9;border:1px solid #8e8e8e"></div>
<div class="a" style="left:1643px;top:450px;width:266px;height:24px;background:#d9d9d9;border-bottom:1px solid #bdbdbd"></div>
<svg style="left:1652px;top:458px" width="7" height="7"><path d="M6.5 0 L6.5 6.5 L0 6.5Z" fill="#2b2b2b"/></svg>
<div class="t nb" style="left:1668px;top:457px">Details</div>
<div class="a" style="left:1768px;top:474px;width:1px;height:149px;background:#c9c9c9"></div>
<div class="t tr" style="left:1647px;top:481px">Closed</div>
<div class="t tr" style="left:1774px;top:481px">No</div>
<div class="a" style="left:1643px;top:498px;width:266px;height:1px;background:#c9c9c9"></div>
<div class="t tr" style="left:1647px;top:506px">Points</div>
<div class="t tr" style="right:14px;top:506px">5</div>
<div class="a" style="left:1643px;top:523px;width:266px;height:1px;background:#c9c9c9"></div>
<div class="t tr" style="left:1647px;top:531px">Max. Height</div>
<div class="t tr" style="right:29px;top:531px">0.0000</div><div class="t tr" style="left:1897px;top:532px">m</div>
<div class="a" style="left:1643px;top:548px;width:266px;height:1px;background:#c9c9c9"></div>
<div class="t tr" style="left:1647px;top:556px">Min. Height</div>
<div class="t tr" style="right:29px;top:556px">0.0000</div><div class="t tr" style="left:1897px;top:557px">m</div>
<div class="a" style="left:1643px;top:573px;width:266px;height:1px;background:#c9c9c9"></div>
<div class="t tr" style="left:1647px;top:581px">Length 2D</div>
<div class="t tr" style="right:29px;top:581px">28.9833</div><div class="t tr" style="left:1897px;top:582px">m</div>
<div class="a" style="left:1643px;top:598px;width:266px;height:1px;background:#c9c9c9"></div>
<div class="t tr" style="left:1647px;top:606px">Length 3D</div>
<div class="t tr" style="right:29px;top:606px">28.9833</div><div class="t tr" style="left:1897px;top:607px">m</div>
<div class="a" style="left:1642px;top:629px;width:268px;height:250px;background:#e9e9e9;border:1px solid #8e8e8e"></div>
<div class="a" style="left:1643px;top:630px;width:266px;height:24px;background:#d9d9d9;border-bottom:1px solid #bdbdbd"></div>
<svg style="left:1652px;top:638px" width="7" height="7"><path d="M6.5 0 L6.5 6.5 L0 6.5Z" fill="#2b2b2b"/></svg>
<div class="t nb" style="left:1668px;top:637px">Points</div>
<div class="a" style="left:1768px;top:654px;width:1px;height:224px;background:#c9c9c9"></div>
<div class="t tr" style="left:1647px;top:661px">Point</div>
<div class="a" style="left:1769px;top:654px;width:108px;height:24px;background:#fff"></div><div class="t tr" style="left:1776px;top:661px">-</div><svg style="left:1864px;top:664px" width="8" height="4"><path d="M0 0 H8 L4 4Z" fill="#222"/></svg><svg style="left:1885px;top:659px" width="15" height="15" viewBox="0 0 15 15"><circle cx="7.5" cy="7.5" r="7" fill="#e8a8a8"/><path d="M4 9 Q5 4.5 10 5.5" fill="none" stroke="#fff" stroke-width="1.8"/><path d="M9 3 L12 6 L8.5 7.5Z" fill="#fff"/></svg>
<div class="a" style="left:1643px;top:678px;width:266px;height:1px;background:#c9c9c9"></div>
<div class="t tr" style="left:1647px;top:686px">Point Role</div>
<div class="t tr" style="left:1774px;top:686px">-</div>
<div class="a" style="left:1643px;top:703px;width:266px;height:1px;background:#c9c9c9"></div>
<div class="t tr" style="left:1647px;top:711px">Code</div>
<div class="t tr" style="left:1774px;top:711px">-</div>
<div class="a" style="left:1643px;top:728px;width:266px;height:1px;background:#c9c9c9"></div>
<div class="t tr" style="left:1647px;top:736px">Linework</div>
<div class="t tr" style="left:1774px;top:736px">Begin line</div>
<div class="a" style="left:1643px;top:753px;width:266px;height:1px;background:#c9c9c9"></div>
<div class="t tr" style="left:1647px;top:761px">Easting</div>
<div class="t tr" style="right:29px;top:761px">6.0000</div><div class="t tr" style="left:1897px;top:762px">m</div>
<div class="a" style="left:1643px;top:778px;width:266px;height:1px;background:#c9c9c9"></div>
<div class="t tr" style="left:1647px;top:786px">Northing</div>
<div class="t tr" style="right:29px;top:786px">-0.7789</div><div class="t tr" style="left:1897px;top:787px">m</div>
<div class="a" style="left:1643px;top:803px;width:266px;height:1px;background:#c9c9c9"></div>
<div class="t tr" style="left:1647px;top:811px">Ortho. Height</div>
<div class="t tr" style="right:29px;top:811px">0.0000</div><div class="t tr" style="left:1897px;top:812px">m</div>
<div class="a" style="left:1643px;top:828px;width:266px;height:1px;background:#c9c9c9"></div>
<div class="t tr" style="left:1647px;top:836px">Ellip. Height</div>
<div class="t tr" style="right:29px;top:836px">-</div><div class="t tr" style="left:1897px;top:837px">m</div>
<div class="a" style="left:1643px;top:853px;width:266px;height:1px;background:#c9c9c9"></div>
<div class="t tr" style="left:1647px;top:861px">Geoid Separation</div>
<div class="t tr" style="right:29px;top:861px">-</div><div class="t tr" style="left:1897px;top:862px">m</div>
<!-- STATUS BAR -->
<div class="a" style="left:0;top:1077px;width:1920px;height:3px;background:#474747"></div>
<svg style="left:10px;top:1057px" width="16" height="16" viewBox="0 0 16 16"><rect width="16" height="16" rx="2" fill="#c3c3c3"/><path d="M2 13.5 L5 9.5 L7 11.5 L3.5 14Z M7 13 L13 4 L14 11Z M5 14 H14" fill="#fff"/></svg>
<svg style="left:31px;top:1057px" width="16" height="16" viewBox="0 0 16 16"><rect width="16" height="16" rx="2" fill="#c3c3c3"/><path d="M3 7 Q3 3 7 4 Q9 1 12 4 Q14 5 13 7 Z" fill="#fff"/><path d="M4 12 L7 9 M7 12 L10 9" stroke="#444" stroke-width="1"/></svg>
<div class="t w" style="left:52px;top:1060px;font-size:12px">1 item selected</div>

<div class="a" style="left:1499px;top:1055px;width:22px;height:20px;background:#777"></div>
<div class="a" style="left:1525px;top:1055px;width:22px;height:20px;background:#777"></div>
<div class="a" style="left:1551px;top:1055px;width:22px;height:20px;background:#777"></div>
<svg style="left:1502px;top:1058px" width="16" height="16" viewBox="0 0 16 16"><circle cx="8" cy="7.5" r="7" fill="none" stroke="#fff" stroke-width="1.2"/><path d="M4.5 4 L9 7 L11.5 11 L7 8Z" fill="#fff"/></svg>
<svg style="left:1528px;top:1057px" width="16" height="17" viewBox="0 0 16 17"><path d="M2 5 V0.75 H10.5 L14 4.25 V15.75 H5" fill="none" stroke="#fff" stroke-width="1.1"/><circle cx="7" cy="9" r="3.5" fill="none" stroke="#fff" stroke-width="1.2"/><path d="M4.5 11.5 L1 15.5" stroke="#fff" stroke-width="1.4"/></svg>
<svg style="left:1554px;top:1057px" width="16" height="16" viewBox="0 0 16 16"><rect x="1" y="1" width="14" height="14" fill="none" stroke="#fff" stroke-width="1.2"/><circle cx="4.5" cy="4.5" r="0.9" fill="#fff"/><circle cx="4.5" cy="8" r="0.9" fill="#fff"/><circle cx="4.5" cy="11.5" r="0.9" fill="#fff"/><path d="M6.5 4.5 H13 M6.5 8 H13 M6.5 11.5 H13" stroke="#fff" stroke-width="1"/></svg>
<svg style="left:1580px;top:1057px" width="17" height="15" viewBox="0 0 17 15"><path d="M4 1 H16 L13 5 H1Z M4 5.5 H16 L13 9.5 H1Z M4 10 H16 L13 14 H1Z" fill="#444" stroke="#fff" stroke-width="1.1"/></svg>
<svg style="left:1607px;top:1057px" width="15" height="16" viewBox="0 0 15 16"><path d="M0.75 15.5 V0.75 H7.25 V9" fill="none" stroke="#fff" stroke-width="1.3"/><path d="M7.25 9 H13.75 V15.5" fill="none" stroke="#fff" stroke-width="1.3"/><rect x="2" y="2" width="2" height="2" fill="#fff"/><rect x="4.8" y="2" width="2" height="2" fill="#fff"/><rect x="2" y="5" width="2" height="2" fill="#fff"/><rect x="4.8" y="5" width="2" height="2" fill="#fff"/><rect x="1" y="10.5" width="6" height="5" fill="#fff"/><rect x="8.5" y="10.5" width="3" height="2" fill="#fff"/></svg>
<svg style="left:1633px;top:1057px" width="15" height="15" viewBox="0 0 15 15"><path d="M1 5 L13 1.5 L14 4 L2 7.5Z" fill="#fff"/><rect x="1" y="7" width="13" height="8" fill="#fff"/><path d="M1 10 H14 M1 12.5 H14" stroke="#444" stroke-width="0.9"/></svg>
<svg style="left:1667px;top:1057px" width="17" height="17" viewBox="0 0 17 17"><circle cx="14" cy="2.5" r="2" fill="none" stroke="#ccc" stroke-width="1"/><circle cx="2.5" cy="14" r="2" fill="none" stroke="#ccc" stroke-width="1"/><path d="M12.5 4 L4 12.5" stroke="#ccc" stroke-width="1" stroke-dasharray="2 1.2"/></svg>
<div class="t w" style="left:1687px;top:1060px;font-size:12px">Meter</div>
<svg style="left:1731px;top:1063px" width="7" height="4"><path d="M0 0 H7 L3.5 4Z" fill="#fff"/></svg>
<svg style="left:1757px;top:1057px" width="18" height="17" viewBox="0 0 18 17"><circle cx="2.5" cy="2" r="1.3" fill="none" stroke="#ccc"/><circle cx="15.5" cy="2.5" r="1.8" fill="none" stroke="#ccc"/><circle cx="3" cy="15" r="1.8" fill="none" stroke="#ccc"/><path d="M3 3.5 V13 M4.5 13.5 L14 4 M3 6 Q6 6 6.5 9" fill="none" stroke="#ccc" stroke-width="0.9" stroke-dasharray="1.5 1"/></svg>
<div class="t w" style="left:1778px;top:1060px;font-size:12px">Gons</div>
<svg style="left:1816px;top:1063px" width="7" height="4"><path d="M0 0 H7 L3.5 4Z" fill="#fff"/></svg>
<svg style="left:1843px;top:1056px" width="17" height="18" viewBox="0 0 17 18"><path d="M5 0.5 H16.5 L11 7 H0Z" fill="#eee"/><circle cx="10.5" cy="12.5" r="4.5" fill="#444" stroke="#eee" stroke-width="1.3"/><path d="M8 12.5 H13 M10.5 9 V10.5 M10.5 14.5 V16" stroke="#eee" stroke-width="1"/></svg>
<div class="t w" style="left:1864px;top:1060px;font-size:12px">None</div>
<svg style="left:1901px;top:1063px" width="7" height="4"><path d="M0 0 H7 L3.5 4Z" fill="#fff"/></svg>

<!-- view toolbar icons -->
<svg style="left:314px;top:1024px" width="17" height="17" viewBox="0 0 17 17"><path d="M0.75 0.75 H16.25 V16.25 H0.75Z M0.75 6 H16.25 M0.75 11 H16.25 M6 0.75 V16.25 M11 0.75 V16.25" fill="none" stroke="#fff" stroke-width="1.2"/><path d="M0.5 16.5 L16.5 0.5" stroke="#434343" stroke-width="3"/><path d="M0.5 16.5 L16.5 0.5" stroke="#fff" stroke-width="1.3"/></svg>
<svg style="left:352px;top:1024px" width="16" height="16" viewBox="0 0 16 16"><circle cx="8" cy="8" r="6" fill="none" stroke="#22c022" stroke-width="1.6"/><circle cx="8" cy="8" r="4" fill="#6d8f9c"/><circle cx="8" cy="1.5" r="1.5" fill="#22c022"/><circle cx="8" cy="14.5" r="1.5" fill="#22c022"/><circle cx="1.5" cy="8" r="1.5" fill="#22c022"/><circle cx="14.5" cy="8" r="1.5" fill="#22c022"/></svg>
<svg style="left:383px;top:1024px" width="17" height="17" viewBox="0 0 17 17"><circle cx="8.5" cy="8.5" r="7.8" fill="#0b8e47" stroke="#f0f0f0" stroke-width="1.3"/><path d="M4 7 Q7 4.5 10 8" fill="none" stroke="#fff" stroke-width="2"/><path d="M8 9.5 L12.5 11.5 L12 6.5Z" fill="#fff"/></svg>
<svg style="left:830px;top:1024px" width="17" height="17" viewBox="0 0 17 17"><path d="M0.75 0.75 H16.25 V16.25 H0.75Z M0.75 6 H16.25 M0.75 11 H16.25 M6 0.75 V16.25 M11 0.75 V16.25" fill="none" stroke="#fff" stroke-width="1.2"/><path d="M0.5 16.5 L16.5 0.5" stroke="#434343" stroke-width="3"/><path d="M0.5 16.5 L16.5 0.5" stroke="#fff" stroke-width="1.3"/></svg>
<svg style="left:867px;top:1024px" width="17" height="17" viewBox="0 0 17 17"><circle cx="8.5" cy="8.5" r="7.8" fill="#b0161c" stroke="#f0f0f0" stroke-width="1.3"/><path d="M13 7 Q10 4.5 7 8" fill="none" stroke="#fff" stroke-width="2"/><path d="M9 9.5 L4.5 11.5 L5 6.5Z" fill="#fff"/></svg>
<!-- cursor -->
<svg style="left:1092px;top:174px" width="14" height="20" viewBox="0 0 14 20"><path d="M0.7 0.7 V16.3 L4.3 12.9 L6.9 18.4 L9.3 17.3 L6.8 12 L11.7 12Z" fill="#fff" stroke="#000" stroke-width="1.3" stroke-linejoin="round"/></svg>

</body></html>
